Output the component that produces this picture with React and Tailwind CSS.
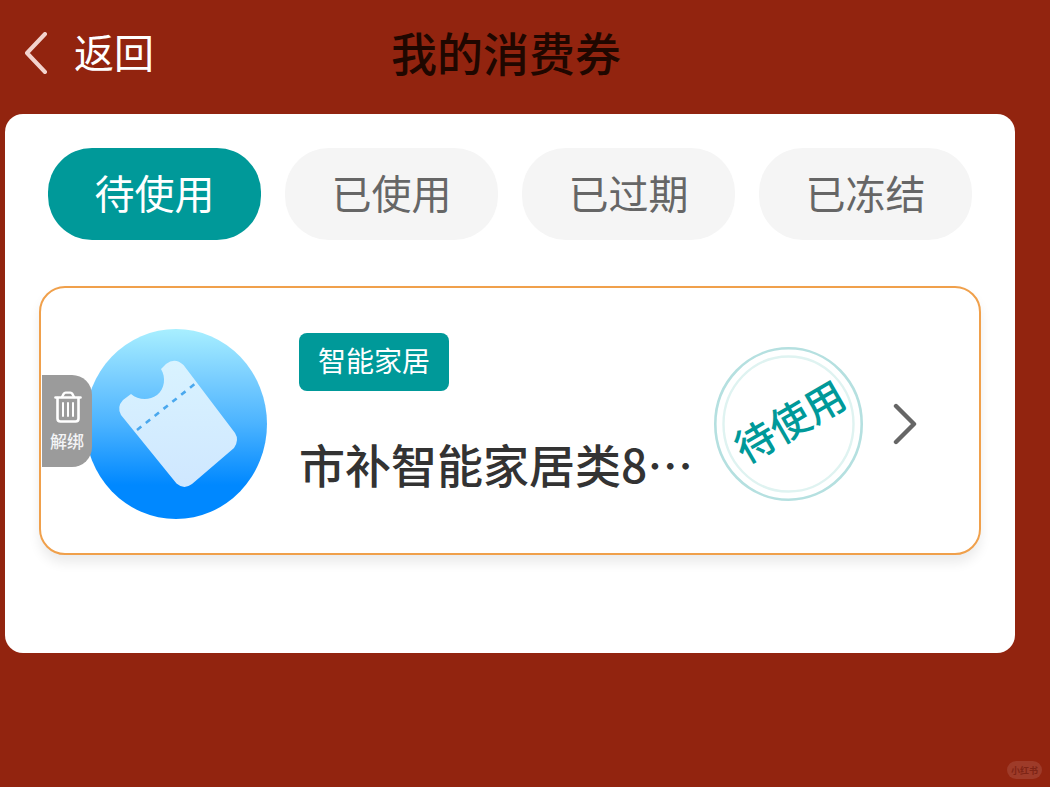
import React from 'react';

const TABS = ['待使用', '已使用', '已过期', '已冻结'];

const coupons = [
  { id: 'c1', category: '智能家居', title: '市补智能家居类8…', status: '待使用' },
];

function BackIcon() {
  return (
    <svg width="24" height="42" viewBox="0 0 24 42" fill="none" stroke="#f3d3cd" strokeWidth="4" strokeLinecap="round" strokeLinejoin="round" aria-hidden="true">
      <path d="M21 2 3 21l18 19" />
    </svg>
  );
}

function ArrowIcon() {
  return (
    <svg width="24" height="42" viewBox="0 0 24 42" fill="none" stroke="#666" strokeWidth="4.400" strokeLinecap="round" strokeLinejoin="round" aria-hidden="true">
      <path d="m3 3 18 18L3 39" />
    </svg>
  );
}

function TrashIcon() {
  return (
    <svg className="ml-[2px]" width="28" height="32" viewBox="0 0 28 32" fill="none" stroke="#fff" strokeLinecap="round" strokeLinejoin="round" aria-hidden="true">
      <path d="M1.500 6.500h25" strokeWidth="2.600" />
      <path d="M8 6 9.800 2.600Q10.400 1.600 11.600 1.600h4.800q1.200 0 1.800 1L20 6" strokeWidth="2.400" />
      <path d="M3.500 7v20.500q0 3 3 3h15q3 0 3-3V7" strokeWidth="2.600" />
      <path d="M9 12v13M14 12v13M19 12v13" strokeWidth="2" />
    </svg>
  );
}

function TicketIcon() {
  return (
    <svg className="shrink-0" width="182" height="190" viewBox="-3 0 182 190" aria-hidden="true">
      <defs>
        <linearGradient id="disc" x1="0" y1="0" x2="0" y2="1">
          <stop offset="0" stopColor="#a8efff" />
          <stop offset="0.250" stopColor="#7bcfff" />
          <stop offset="0.500" stopColor="#4bb3ff" />
          <stop offset="0.820" stopColor="#0088ff" />
          <stop offset="1" stopColor="#0088ff" />
        </linearGradient>
        <linearGradient id="ticket" x1="0" y1="0" x2="0" y2="1">
          <stop offset="0" stopColor="#d9f3ff" />
          <stop offset="1" stopColor="#cfe7ff" />
        </linearGradient>
      </defs>
      <ellipse cx="88" cy="95" rx="91" ry="95" fill="url(#disc)" />
      <path
        d="M73 40 78 35Q87 28 95.500 36L147 104Q151.500 111 146 119L104 155Q96 161 88.500 154.500L33 86Q28.500 78 35 71L43 65C50 71 61 72 69 66C77 60 78 48 73 40Z"
        fill="url(#ticket)"
      />
      <path d="M49 101 108 54" stroke="#4aa8ee" strokeWidth="2.600" strokeDasharray="5.500 5.800" fill="none" />
    </svg>
  );
}

function Stamp({ label }) {
  return (
    <div className="relative flex h-[154px] w-[149px] shrink-0 items-center justify-center pb-2">
      <svg className="absolute inset-0 h-full w-full" viewBox="0 0 149 154" fill="none" aria-hidden="true">
        <ellipse cx="74.500" cy="77" rx="73.200" ry="75.700" stroke="#b5e0e0" strokeWidth="2.600" />
        <ellipse cx="74.500" cy="77" rx="65" ry="67.500" stroke="#dff3f1" strokeWidth="2.400" />
      </svg>
      <span className="relative -rotate-30 text-[40px] leading-none font-medium whitespace-nowrap text-[#009999]">{label}</span>
    </div>
  );
}

function CouponCard({ coupon, onUnbind }) {
  return (
    <li className="relative flex items-center rounded-[26px] border-2 border-[#f0a04b] bg-white pt-[41px] pr-[62px] pb-[34px] pl-11 shadow-[0_8px_12px_rgba(0,0,0,0.08)]">
      <TicketIcon />

      <button
        type="button"
        onClick={() => onUnbind(coupon.id)}
        className="absolute top-[87px] left-px flex h-[92px] w-[50px] flex-col items-center justify-center gap-2 rounded-r-[20px] bg-[#9b9b9b] text-white"
      >
        <TrashIcon />
        <span className="text-[17px] leading-5 font-medium text-gray-100">解绑</span>
      </button>

      <div className="mt-1 ml-8 min-w-0 flex-1 self-start">
        <span className="inline-flex h-[58px] items-center rounded-lg bg-[#009999] px-[19px] pb-1 text-[28px] leading-none text-white">
          {coupon.category}
        </span>
        <h2 className="mt-10 text-[46px] leading-[64px] font-medium whitespace-nowrap text-[#333]">{coupon.title}</h2>
      </div>

      <Stamp label={coupon.status} />
      <a href="#detail" aria-label="查看详情" className="ml-[30px] shrink-0">
        <ArrowIcon />
      </a>
    </li>
  );
}

export default function App() {
  const [tab, setTab] = React.useState('待使用');
  const [list, setList] = React.useState(coupons);
  const shown = list.filter(c => c.status === tab);

  return (
    <div lang="zh-CN" className="relative min-h-screen bg-[#92240f] font-['Noto_Sans_CJK_SC',sans-serif]">
      <header className="flex items-center pt-5 pr-[38px] pb-7 pl-0">
        <div className="flex-1">
          <a href="#back" className="flex w-fit items-center gap-[26px] pl-6 text-[40px] leading-[62px] text-white">
            <BackIcon />
            <span className="pb-1">返回</span>
          </a>
        </div>
        <h1 className="pb-1 text-[46px] leading-[62px] font-medium text-[#1f0700]">我的消费券</h1>
        <div className="flex-1" />
      </header>

      <main className="mr-[35px] ml-[5px] rounded-[18px] bg-white pt-[34px] pb-[98px]">
        <nav className="grid grid-cols-4 gap-6 px-[43px]">
          {TABS.map(t => (
            <button
              key={t}
              type="button"
              onClick={() => setTab(t)}
              className={`h-[92px] rounded-[44px] pb-1 text-[40px] leading-none ${t === tab ? 'bg-[#009999] text-white' : 'bg-[#f5f5f5] text-[#666]'}`}
            >
              {t}
            </button>
          ))}
        </nav>

        <ul className="mt-[46px] space-y-6 px-[34px]">
          {shown.map(c => (
            <CouponCard key={c.id} coupon={c} onUnbind={id => setList(l => l.filter(x => x.id !== id))} />
          ))}
        </ul>
      </main>

      {/* Watermark */}
      <span className="absolute right-2 bottom-2 flex h-[18px] items-center rounded-full bg-[#9e3b29] px-1 text-[9px] leading-none font-bold text-[#7e2415]">
        小红书
      </span>
    </div>
  );
}
